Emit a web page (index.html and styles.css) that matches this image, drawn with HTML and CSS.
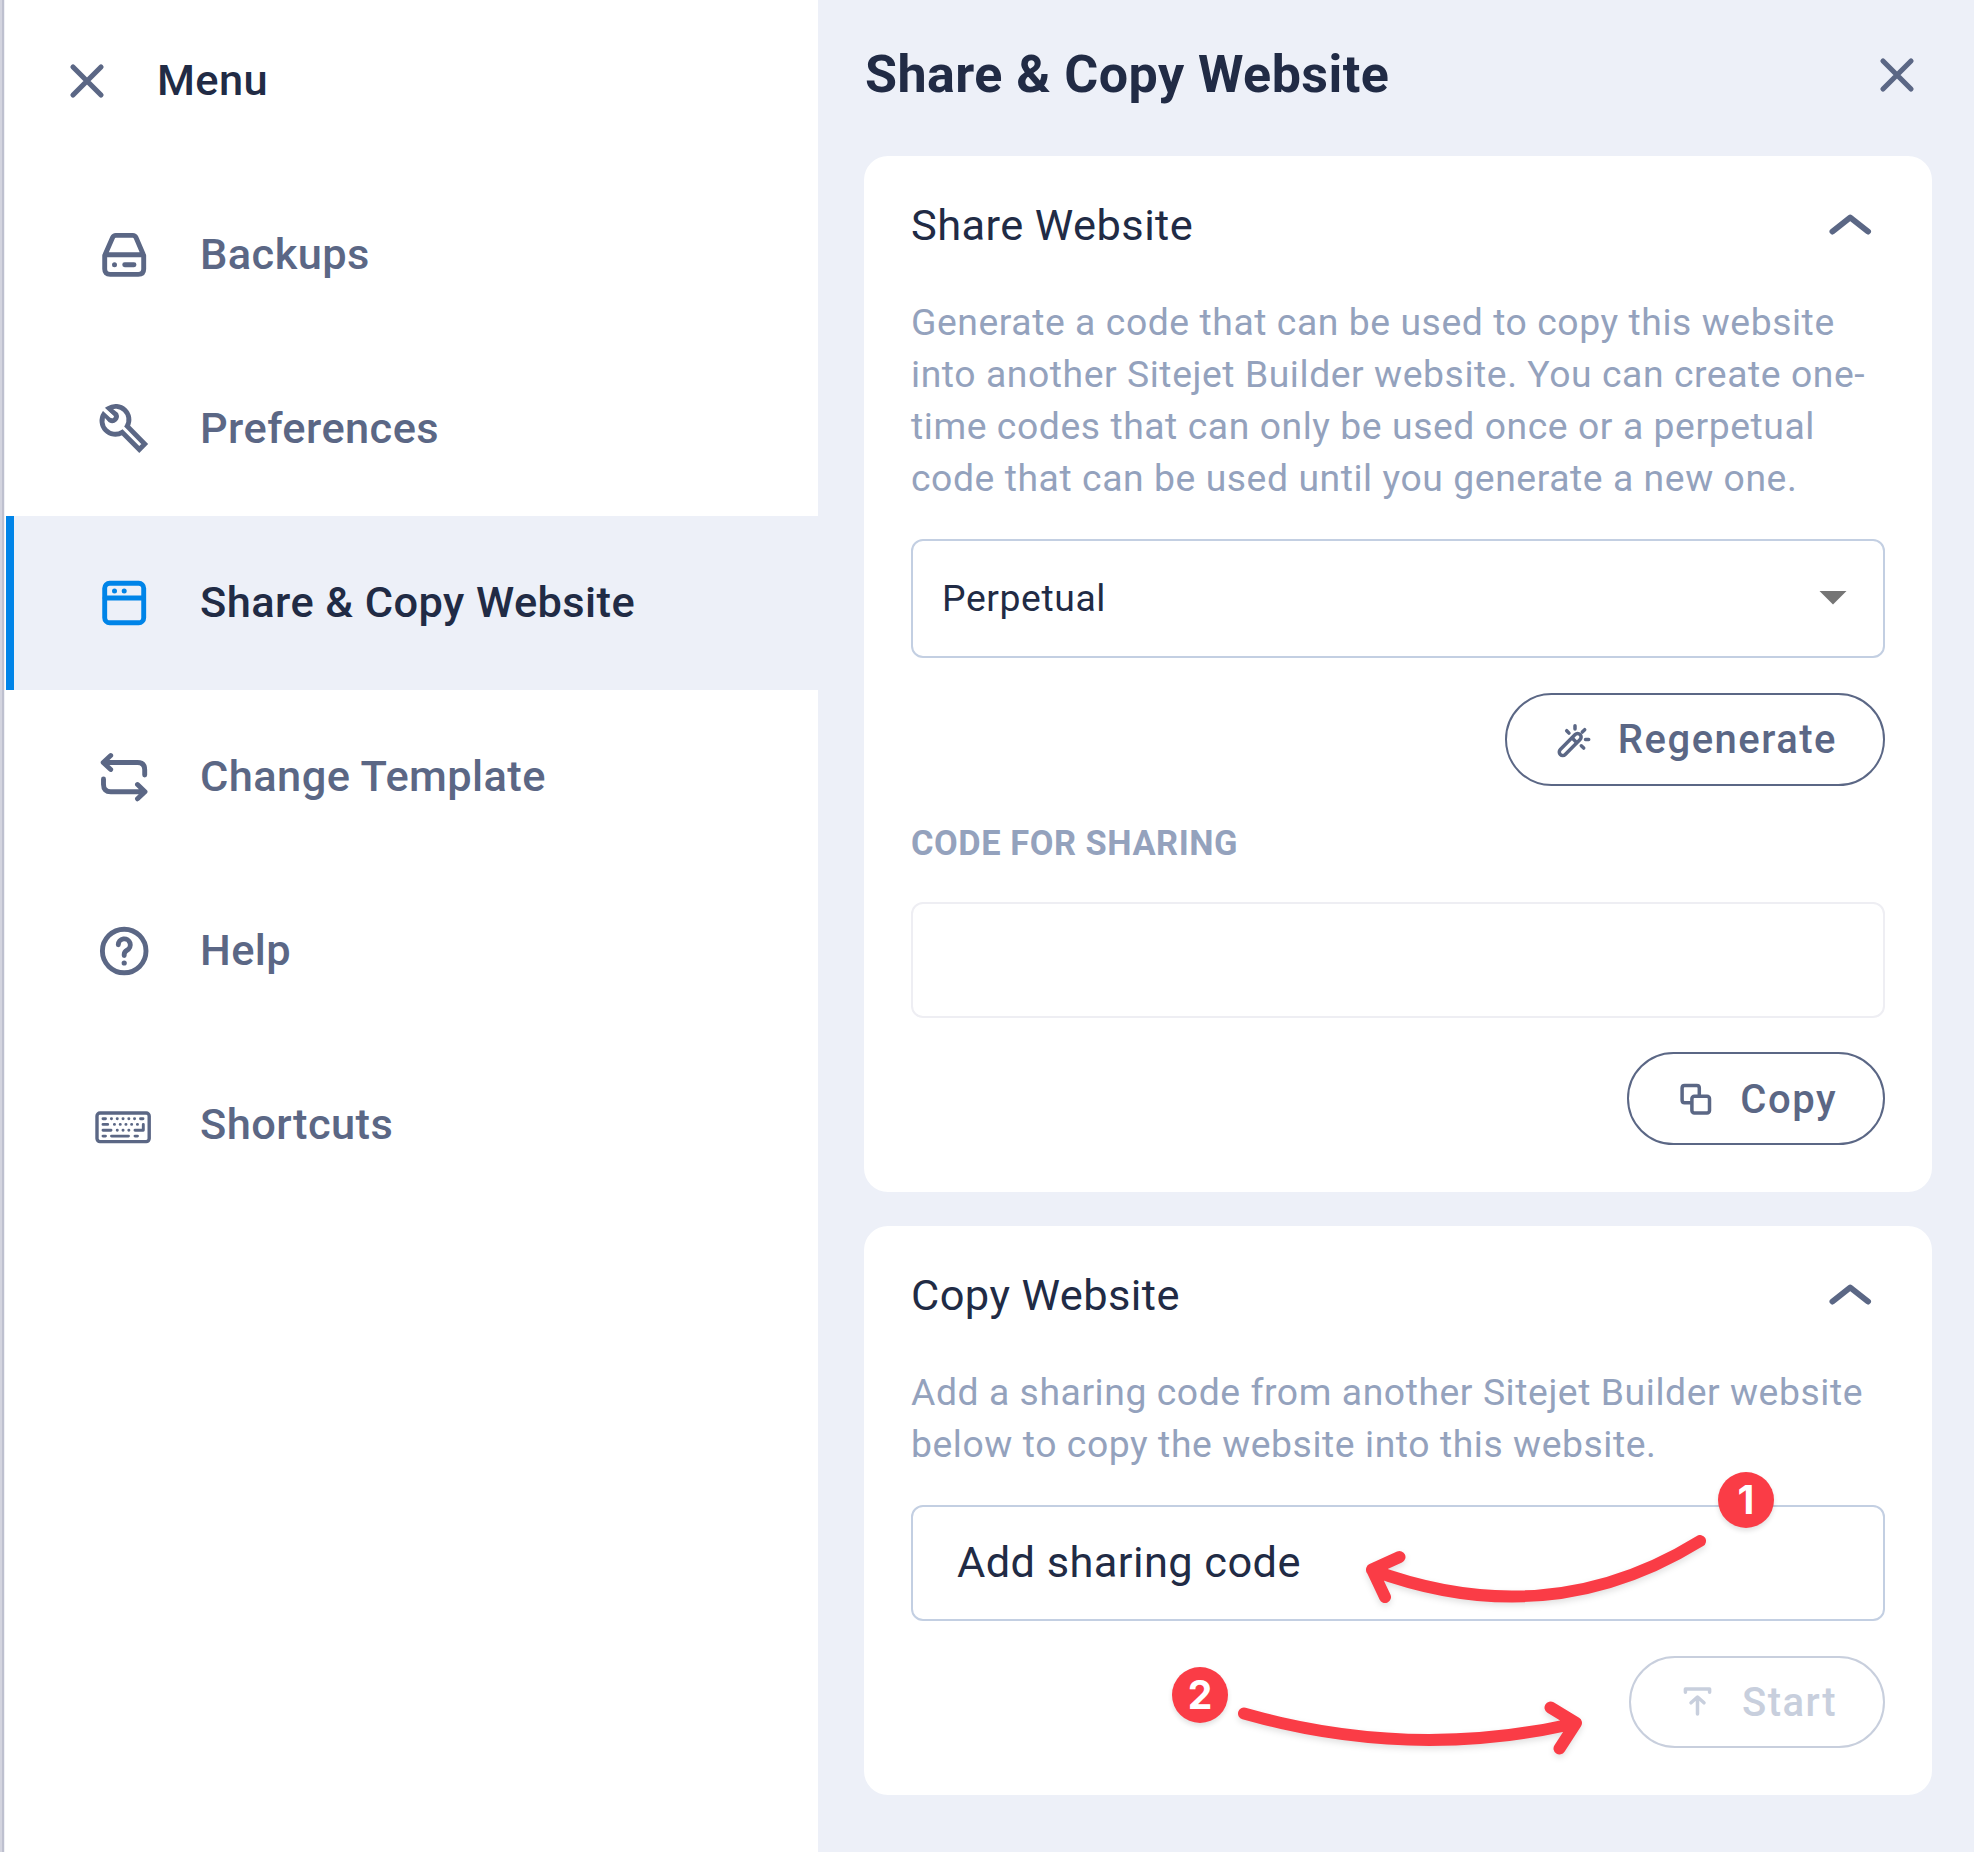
FILE: index.html
```html
<!DOCTYPE html>
<html lang="en">
<head>
<meta charset="utf-8">
<title>Share &amp; Copy Website</title>
<link rel="stylesheet" href="styles.css">
</head>
<body>
<div class="app">
  <aside class="sidebar">
    <header class="menu-head">
      <svg class="close" viewBox="0 0 38 38"><path d="M5 5 33 33M33 5 5 33"/></svg>
      <span class="menu-title">Menu</span>
    </header>
    <nav class="menu">
      <a class="item">
        <span class="slot"><svg class="icon" width="52" height="52" viewBox="0 0 52 52"><path d="M6.7 26.5 14.6 8.6q1-2.2 3.2-2.2h17q2.200 0 3.200 2.200l7.700 17.900V40q0 5.400-5.400 5.400H12.100q-5.400 0-5.400-5.400ZM7 25.700H45.400M26.700 35.700H36"/><circle class="dot" cx="16.500" cy="35.700" r="2.500"/></svg></span>
        <span class="label">Backups</span>
      </a>
      <a class="item">
        <span class="slot"><svg class="icon wrench" width="52" height="52" viewBox="0 0 52 52"><path d="M10.400 5.500A13.300 13.300 0 0 1 29.200 23.200L46.700 41.100 41.300 46.500 24.200 29.300A13.300 13.300 0 0 1 6.200 10.600L12.100 17.100A4.300 4.300 0 0 0 18 11.500Z"/><path class="gap" d="M3 3.600 13 13"/></svg></span>
        <span class="label">Preferences</span>
      </a>
      <a class="item active">
        <span class="slot"><svg class="icon" width="52" height="52" viewBox="0 0 52 52"><rect x="6.700" y="6.300" width="39" height="39.400" rx="5"/><path d="M7 21H45.500"/><circle class="dot" cx="16.500" cy="13.900" r="2.500"/><circle class="dot" cx="26.200" cy="13.900" r="2.500"/></svg></span>
        <span class="label">Share &amp; Copy Website</span>
      </a>
      <a class="item">
        <span class="slot"><svg class="icon" width="52" height="52" viewBox="0 0 52 52"><path d="M12.700 4.500 5.200 11.500 12.700 18.500M5.500 11.500H39.500q7.200 0 7.200 7.200V24M39.500 33.500 47 40.700 39.500 47.800M46.600 40.700H12.700q-7.200 0-7.200-7.200V28"/></svg></span>
        <span class="label">Change Template</span>
      </a>
      <a class="item">
        <span class="slot"><svg class="icon" width="52" height="52" viewBox="0 0 52 52"><circle cx="26.200" cy="26" r="21.800"/><path d="M20.300 19.800A6 6 0 1 1 29 25.200Q26.200 26.600 26.200 29.500V30.500"/><circle class="dot" cx="26.200" cy="38" r="2.600"/></svg></span>
        <span class="label">Help</span>
      </a>
      <a class="item">
        <span class="slot"><svg class="icon keyboard" width="58" height="52" viewBox="0 0 58 52"><rect x="2" y="14" width="52.200" height="28.600" rx="3"/><path class="keys" d="M8 19.800h2.500M16.400 19.800h.1M22.200 19.800h.1M28 19.800h.1M33.800 19.800h.1M39.500 19.800h.1M45.500 19.800h2.500M8 25.400h4.700M19.400 25.400h.1M25.200 25.400h.1M30.900 25.400h.1M36.600 25.400h.1M42.400 25.400h.1M48.300 25.400V31.300H40M8 31.300h8M22.200 31.300h.1M28 31.300h.1M33.800 31.300h.1M8 37.100h2.500M16.500 37.100h17M40 37.100h2.500"/></svg></span>
        <span class="label">Shortcuts</span>
      </a>
    </nav>
  </aside>

  <main class="panel">
    <header class="panel-head">
      <h1>Share &amp; Copy Website</h1>
      <svg class="close" viewBox="0 0 38 38"><path d="M5 5 33 33M33 5 5 33"/></svg>
    </header>

    <section class="card">
      <div class="card-head">
        <h2>Share Website</h2>
        <svg class="chevron" viewBox="0 0 44 28"><path d="M4.500 20.500 22.200 6.500 40 20.500"/></svg>
      </div>
      <p>Generate a code that can be used to copy this website<br>into another Sitejet Builder website. You can create one-<br>time codes that can only be used once or a perpetual<br>code that can be used until you generate a new one.</p>
      <div class="field select"><span>Perpetual</span><svg width="28" height="16" viewBox="0 0 28 16"><path d="M.500 1H27.500L14 14.500Z"/></svg></div>
      <button class="button">
        <svg width="40" height="40" viewBox="0 0 40 40"><rect x="-14" y="-3.500" width="28" height="7" rx="3.500" transform="translate(16.200 24.500) rotate(-45)"/><path d="M18.200 18.100 22.600 22.500M21 5.700V9M12.700 10.700 15 13.100M30.700 9.700 28.300 12.100M31.500 19.500H34.700M27.300 25.800 29.700 28.100"/></svg>
        Regenerate
      </button>
      <div class="caption">CODE FOR SHARING</div>
      <div class="field muted"></div>
      <button class="button copy">
        <svg width="40" height="40" viewBox="0 0 40 40"><rect x="15.900" y="16.300" width="17.600" height="16.800" rx="2.500"/><path d="M15 22.700H8.600q-2.500 0-2.500-2.500V8q0-2.500 2.500-2.500h12.200q2.500 0 2.500 2.500v7.500"/></svg>
        Copy
      </button>
    </section>

    <section class="card">
      <div class="card-head">
        <h2>Copy Website</h2>
        <svg class="chevron" viewBox="0 0 44 28"><path d="M4.500 20.500 22.200 6.500 40 20.500"/></svg>
      </div>
      <p>Add a sharing code from another Sitejet Builder website<br>below to copy the website into this website.</p>
      <div class="field code"><span>Add sharing code</span></div>
      <button class="button start" disabled>
        <svg width="40" height="40" viewBox="0 0 40 40"><path d="M7.400 9.200V5.900H31.600V9.200M19.500 14.500V31M13 19.800 19.500 14 26 19.800"/></svg>
        Start
      </button>
    </section>
  </main>

  <svg class="arrows" width="720" height="320" viewBox="1170 1460 720 320">
    <path d="M1700 1541Q1548 1635 1372 1570M1399.500 1557 1372 1569.500 1385 1597"/>
    <path d="M1244 1713.500Q1410 1760.700 1575 1723.500M1550.500 1707.500 1576 1723 1559.500 1748.500"/>
  </svg>
  <span class="step one">1</span>
  <span class="step two">2</span>
</div>
</body>
</html>
```
FILE: styles.css
```css
* { box-sizing: border-box; }

body {
  margin: 0;
  font-family: Roboto, "Liberation Sans", sans-serif;
  color: #212b45;
  background: #fff;
}

h1, h2, p { margin: 0; }

.app {
  position: relative;
  display: flex;
  width: 1974px;
  height: 1852px;
  overflow: hidden;
}

svg { flex: none; fill: none; stroke-linecap: round; stroke-linejoin: round; }

/* Sidebar */
.sidebar {
  width: 818px;
  padding-left: 6px;
  background: linear-gradient(90deg, #d3d4df 0 2px, #bec0cf 2px 4px, #f0f1f5 4px 5px, #fff 5px);
}

.menu-head {
  display: flex;
  align-items: center;
  gap: 51px;
  height: 161px;
  padding-left: 62px;
  margin-bottom: 7px;
}

.close { width: 38px; height: 38px; stroke: #5b6785; stroke-width: 5.2; }

.menu-title, .label {
  font-size: 43.4px;
  font-weight: 500;
  line-height: 52px;
  letter-spacing: .42px;
}

.item {
  display: flex;
  align-items: center;
  gap: 50px;
  height: 174px;
  padding-left: 92px;
  color: #5b6785;
}

.item.active {
  padding-left: 84px;
  border-left: 8px solid #0084e8;
  background: #edf0f8;
  color: #212b45;
}

.slot { display: flex; width: 52px; justify-content: center; }
.icon { stroke: #5b6785; stroke-width: 4.9; }
.icon .dot { fill: #5b6785; stroke: none; }
.active .icon { stroke: #0084e8; }
.active .icon .dot { fill: #0084e8; }
.wrench { stroke-linejoin: miter; }
.wrench .gap { stroke: #fff; stroke-width: 3.6; }
.keyboard { stroke-width: 3.4; }
.keyboard .keys { stroke-width: 2.9; }

/* Panel */
.panel {
  flex: 1;
  padding: 0 42px 0 46px;
  background: #edf0f8;
}

.panel-head {
  display: flex;
  align-items: center;
  justify-content: space-between;
  height: 149px;
  margin-bottom: 7px;
  padding: 0 16px 0 1px;
}

h1 { font-size: 52px; font-weight: 700; line-height: 60px; letter-spacing: .45px; }

.card {
  display: flex;
  flex-direction: column;
  padding: 47px;
  margin-bottom: 34px;
  border-radius: 24px;
  background: #fff;
}

.card-head {
  display: flex;
  align-items: center;
  justify-content: space-between;
  height: 44px;
  padding-right: 13px;
}

h2 { padding-top: 2px; font-size: 43.4px; font-weight: 400; letter-spacing: .42px; line-height: 44px; }

.chevron { width: 44px; height: 28px; stroke: #5b6785; stroke-width: 6; }

p {
  margin: 49px 0 35px;
  font-size: 37.3px;
  line-height: 52px;
  letter-spacing: .57px;
  white-space: nowrap;
  color: #94a2bd;
}

.field {
  display: flex;
  align-items: center;
  justify-content: space-between;
  height: 116px;
  border: 2px solid #c3cfe2;
  border-radius: 12px;
}

.select { height: 119px; padding: 0 36px 2px 29px; font-size: 37.3px; letter-spacing: .6px; }
.muted { border-color: #eeeef3; }
.select svg { fill: #757575; }
.code { padding: 0 0 1px 44px; font-size: 43.4px; letter-spacing: .42px; }

.button {
  display: flex;
  align-items: center;
  align-self: flex-end;
  gap: 24px;
  height: 93px;
  margin-top: 35px;
  padding: 0 46px 0 47px;
  border: 2px solid #5b6785;
  border-radius: 47px;
  background: none;
  color: #5b6785;
  font: 500 40px/48px Roboto, "Liberation Sans", sans-serif;
  letter-spacing: 1.5px;
}

.button svg { stroke: currentColor; stroke-width: 3.5; }
.button.copy { margin-top: 34px; padding-top: 2px; }
.button.start { height: 92px; padding-top: 2px; border-color: #c8cfdd; color: #c8cfdd; }

.caption {
  margin: 37px 0 39px;
  font-size: 34.4px;
  font-weight: 700;
  line-height: 40px;
  letter-spacing: .55px;
  color: #94a2bd;
}

/* Annotations laid over the panel */
.arrows {
  position: absolute;
  left: 1170px;
  top: 1460px;
  stroke: #fa3c46;
  stroke-width: 12;
  filter: drop-shadow(0 3px 3px rgba(0, 0, 0, .12));
}

.step {
  position: absolute;
  width: 56px;
  height: 56px;
  border-radius: 50%;
  background: #fa3c46;
  color: #fff;
  font: 700 39px/56px Inter, sans-serif;
  text-align: center;
  box-shadow: 0 3px 5px rgba(0, 0, 0, .12);
}

.one { left: 1718px; top: 1472px; }
.two { left: 1172px; top: 1667px; }
```
